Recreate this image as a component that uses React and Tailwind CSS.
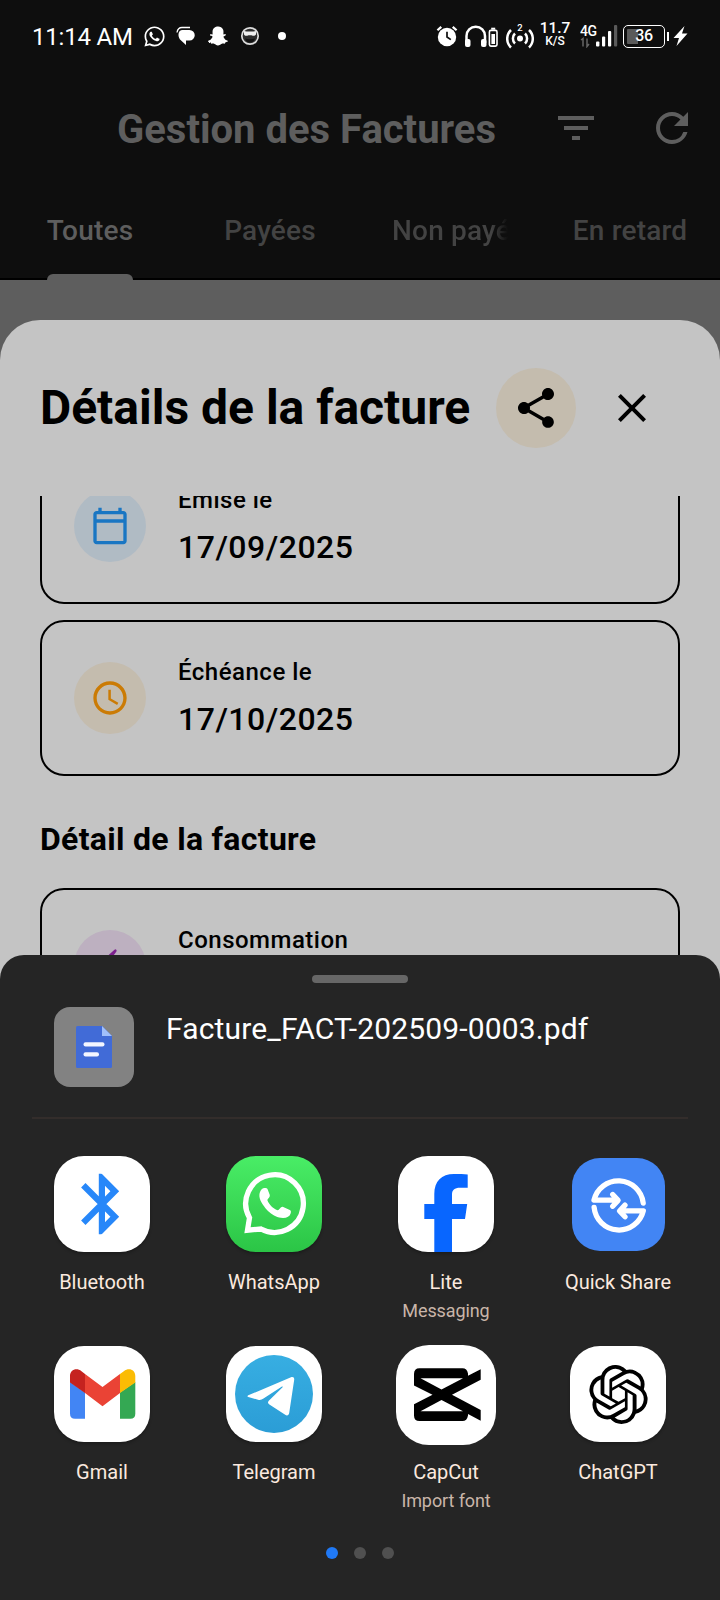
import React from "react";
import {
  MdFilterList,
  MdRefresh,
  MdShare,
  MdClose,
  MdOutlineCalendarToday,
  MdAccessTime,
  MdElectricBolt,
} from "react-icons/md";
import { FaWhatsapp, FaSnapchatGhost } from "react-icons/fa";
import { SiOpenai } from "react-icons/si";

function StatusBar() {
  return (
    <div className="flex h-[72px] items-center pl-[32px] text-white">
      <span className="mt-[1px] w-[99px] whitespace-nowrap text-[24px] leading-none tracking-[-0.200px]">11:14 AM</span>
      <FaWhatsapp className="ml-[12px] size-[23px]" />
      <svg className="ml-[10px] h-[20px] w-[20px]" viewBox="0 0 20 20">
        <path d="M6.500 4H13.500a5 5 0 0 1 0 10.500h-3.500v4.500L4 13.500C1.500 10 2 4 6.500 4Z" fill="white" />
        <path d="M1 6.500C1.500 3.500 3 1.500 6 1.500h8" stroke="white" strokeWidth="1.300" fill="none" />
      </svg>
      <FaSnapchatGhost className="ml-[12px] size-[20px]" />
      <svg className="ml-[12px] size-[20px]" viewBox="0 0 20 20">
        <circle cx="10" cy="10" r="8.200" fill="#2c2c2c" stroke="#ddd" strokeWidth="1.700" />
        <path d="M4 5l2.500.5h7L16 5v3.500c-1.500 2-3 1.200-4.500.7h-3C7 9.700 5 10.500 4 8.500Z" fill="#f0f0f0" />
        <path d="M5 12.500c3 1 7 1 10 0-1 3-3 4-5 4s-4-1-5-4Z" fill="#111" />
      </svg>
      <span className="ml-[18px] size-[8px] rounded-full bg-white" />

      <svg className="ml-[150px] h-[24px] w-[22px]" viewBox="0 0 23 24">
        <circle cx="11.500" cy="13" r="9.600" fill="white" />
        <path d="M1.500 6l4-3.500M21.500 6l-4-3.500" stroke="white" strokeWidth="2.400" />
        <path d="M11.500 7.500V13l4 2.800" stroke="#0e0e0e" strokeWidth="1.800" fill="none" />
      </svg>
      <svg className="ml-[6px] h-[24px] w-[35px] shrink-0" viewBox="0 0 35 24">
        <path d="M2.500 19v-7a9 9 0 0 1 18.500 0v7" stroke="white" strokeWidth="2.500" fill="none" />
        <rect x="1" y="15" width="5.500" height="8" rx="2" fill="white" />
        <rect x="17" y="15" width="5.500" height="8" rx="2" fill="white" />
        <rect x="25.400" y="6.400" width="7.600" height="15.700" rx="1.500" fill="none" stroke="white" strokeWidth="1.600" />
        <rect x="27.200" y="3.700" width="4" height="2" fill="white" />
        <rect x="27.400" y="10" width="3.600" height="10" fill="white" />
      </svg>
      <svg className="-mt-[1px] ml-[7px] h-[26px] w-[28px] shrink-0" viewBox="0 0 28 26">
        <circle cx="14" cy="15.500" r="3" fill="white" />
        <path d="M9 10.500a7 7 0 0 0 0 10M19 10.500a7 7 0 0 1 0 10M5 7a12 12 0 0 0 0 17.500M23 7a12 12 0 0 1 0 17.500" stroke="white" strokeWidth="2.500" fill="none" />
        <text x="14" y="8" fontSize="9.500" fontFamily="Roboto" fontWeight="500" fill="white" textAnchor="middle">2</text>
      </svg>
      <span className="-mt-[3px] ml-[6px] flex w-[30px] shrink-0 flex-col items-center font-medium">
        <span className="text-[15.500px] leading-[13px]">11.7</span>
        <span className="text-[12px] leading-[12px]">K/S</span>
      </span>
      <svg className="ml-[10px] h-[24px] w-[38px] shrink-0" viewBox="0 0 38 24">
        <text x="0" y="12" fontSize="14" fontFamily="Roboto" fontWeight="500" letterSpacing="-0.400" fill="white">4G</text>
        <path d="M1 16l2-1.500v8M7 14.500v8l2-2.500" stroke="#666" strokeWidth="1.500" fill="none" />
        <rect x="16" y="17.500" width="3.400" height="5" rx="1" fill="white" />
        <rect x="22" y="12.500" width="3.200" height="10" rx="1" fill="white" />
        <rect x="28" y="7" width="3.200" height="15.500" rx="1" fill="white" />
        <rect x="34" y="1" width="3.200" height="21.500" rx="1" fill="#5a5a5a" />
      </svg>
      <span className="ml-[5px] flex h-[23px] w-[42px] shrink-0 items-center justify-center rounded-[5px] border-[1.500px] border-white bg-[linear-gradient(90deg,#5a5a5a_36%,#0e0e0e_36%)] bg-clip-content p-[3px] text-[16px] font-medium leading-none tracking-[-0.300px]">
        36
      </span>
      <span className="ml-[2px] h-[9px] w-[2px] bg-white" />
      <svg className="ml-[4px] h-[22px] w-[15px]" viewBox="0 0 15 22">
        <path d="M11.500 1L0.500 13h5.500L3.500 21 14.500 8.500h-5.500Z" fill="white" />
      </svg>
    </div>
  );
}

function Tab({ label, active, clipped }) {
  return (
    <div className="relative flex w-[180px] items-center justify-center text-[28px] font-medium leading-none tracking-[0.200px]">
      {clipped ? (
        <span className="w-[116px] overflow-hidden whitespace-nowrap bg-[linear-gradient(90deg,#434343_86%,transparent)] bg-clip-text py-[4px] text-transparent">
          {label}
        </span>
      ) : (
        <span className={active ? "text-[#5e5e5e]" : "text-[#434343]"}>{label}</span>
      )}
      {active && <span className="absolute -bottom-[2px] h-[6px] w-[86px] rounded-t-[6px] bg-[#5e5e5e]" />}
    </div>
  );
}

function InfoCard({ icon, tint, label, value }) {
  return (
    <div className="flex h-[156px] shrink-0 items-center rounded-[24px] border-2 border-black pl-[32px]">
      <span className={"flex size-[72px] items-center justify-center rounded-full " + tint}>{icon}</span>
      <div className="mb-[2px] ml-[32px] flex flex-col gap-[19px] font-medium leading-none text-black">
        <span className="text-[24px] tracking-[0.500px]">{label}</span>
        <span className="h-[32px] text-[32px] tracking-[0.500px]">{value}</span>
      </div>
    </div>
  );
}

const tile = "size-[96px] rounded-[30px] shadow-[0_2px_3px_rgba(0,0,0,0.25)]";

function BluetoothIcon() {
  return (
    <svg className={tile + " bg-white"} viewBox="0 0 96 96">
      <clipPath id="bt"><rect x="20" y="17.700" width="60" height="60.500" /></clipPath>
      <path clipPath="url(#bt)" d="M29.300 66.800L60.800 35.200 47.900 22.300V73.700L60.800 60.800 29.300 29.200" fill="none" stroke="#2787f9" strokeWidth="6.200" strokeMiterlimit="4" />
    </svg>
  );
}

function WhatsAppIcon() {
  return (
    <svg className={tile + " bg-linear-to-b from-[#49ed66] to-[#2bc546]"} viewBox="0 0 96 96">
      <path d="M35 73A28.800 28.800 0 1 0 23.500 61.800L21.500 74.200Z" fill="none" stroke="white" strokeWidth="5.300" />
      <path d="M34 36C35 33.500 36.700 32 38.500 32C40.500 31.800 41.200 32.300 41.700 33.500L43.800 39C44.200 41 42 42.500 41.300 44C43 48.500 47 52.500 51.500 54.300C53.500 54 54.500 50.500 56.700 50.700L63.800 54C65 54.700 65.200 55.600 64.600 57.500C63.800 60.300 61 62 57 62C51.500 62 47.500 59.500 43.500 56.300C39.500 53 36 47.500 34.500 44.500C33.300 41.500 32.900 38.800 34 36Z" fill="white" />
    </svg>
  );
}

function FacebookLiteIcon() {
  return (
    <svg className={tile + " bg-white"} viewBox="0 0 96 96">
      <path d="M36.300 96V63H26.300V48H36.300V38C36.300 25 43.500 18 56 18C61 18 66 18 69.700 18.600V31.700H62C56.500 31.700 54 34 54 38.500V48H69.200L67 63H54V96Z" fill="#0866ff" />
    </svg>
  );
}

function QuickShareIcon() {
  return (
    <span className="flex size-[96px] items-center justify-center">
      <svg className="size-[93px] shrink-0 rounded-[28px] bg-[#4285f4]" viewBox="1.500 1.500 93 93">
        <g fill="none" stroke="white" strokeWidth="5.300" strokeLinecap="round" strokeLinejoin="round">
          <path d="M72.700 46.500A25 25 0 0 0 23.500 43.700H46M42.200 38L47.600 43.900L42.200 49.800" />
          <path d="M23.600 50.800A25 25 0 0 0 72.800 54.400H50M54.500 48.600L49 54.500L54.500 60.300" />
        </g>
      </svg>
    </span>
  );
}

function GmailIcon() {
  return (
    <svg className={tile + " bg-white"} viewBox="0 0 96 96">
      <path d="M16 36L31 46.500V72.700H21Q16 72.700 16 67.700Z" fill="#4285f4" />
      <path d="M66 46.500L81.300 36V67.700Q81.300 72.700 76.300 72.700H66Z" fill="#34a853" />
      <path d="M16 36.400V30C16 24 22.500 21 27.500 25.300L31 28V47Z" fill="#c5221f" />
      <path d="M66 28L69.800 25.300C75 21 81.300 24 81.300 30V36.400L66 47Z" fill="#fbbc04" />
      <path d="M31 28L48.500 41L66 28V47L48.500 60.300L31 47Z" fill="#ea4335" />
    </svg>
  );
}

function TelegramIcon() {
  return (
    <svg className={tile + " bg-white"} viewBox="0 0 96 96">
      <linearGradient id="tg" x1="0" y1="0" x2="0" y2="1">
        <stop offset="0" stopColor="#37aee2" />
        <stop offset="1" stopColor="#2b9dd6" />
      </linearGradient>
      <circle cx="48" cy="48" r="39" fill="url(#tg)" />
      <path d="M22.300 49.300L65 31.200C67 30.400 68.500 31.400 68.200 33.800L63.200 67C62.800 69.500 61 70 59.200 68.800L43 58.200C41.600 57.200 41.700 56 42.800 54.800L56.600 41.200C57 40.500 56.300 40.200 55.600 40.700L37.500 52.500C35.800 53.800 34 54.200 32 53.700L22.300 51C21.200 50.600 21.200 49.800 22.300 49.300Z" fill="white" />
    </svg>
  );
}

function CapCutIcon() {
  return (
    <span className="flex size-[96px] items-center justify-center pt-[2px]">
      <svg className="size-[100px] shrink-0 rounded-[33px] bg-white" viewBox="0 0 100 100">
        <path
          fillRule="evenodd"
          d="M18 29Q18 23.300 23.500 23.300H66.500Q71 23.300 72 28.500V30.700L84.700 24.300V34.700L56 49.700L84.700 65V75.700L72 69V70.500Q71 76 66.500 76H23.500Q18 76 18 70.500V59.300L36.500 49.700L18 40.500ZM24.500 33.300L45.500 44.500L67 33.300ZM24.500 66.200H67L45.500 55Z"
          fill="black"
        />
      </svg>
    </span>
  );
}

function ChatGPTIcon() {
  return (
    <span className={tile + " flex items-center justify-center bg-white"}>
      <SiOpenai className="size-[59px] text-black" />
    </span>
  );
}

const apps = [
  { name: "Bluetooth", Icon: BluetoothIcon },
  { name: "WhatsApp", Icon: WhatsAppIcon },
  { name: "Lite", sub: "Messaging", Icon: FacebookLiteIcon },
  { name: "Quick Share", Icon: QuickShareIcon },
  { name: "Gmail", Icon: GmailIcon },
  { name: "Telegram", Icon: TelegramIcon },
  { name: "CapCut", sub: "Import font", Icon: CapCutIcon },
  { name: "ChatGPT", Icon: ChatGPTIcon },
];

function ShareSheet() {
  return (
    <section className="absolute inset-x-0 bottom-0 flex h-[645px] flex-col rounded-t-[24px] bg-[#252525]">
      <div className="mx-auto mt-[20px] h-[8px] w-[96px] shrink-0 rounded-[4px] bg-[#676767]" />
      <div className="mt-[24px] flex h-[80px] shrink-0 pl-[54px]">
        <span className="flex size-[80px] items-center justify-center rounded-[16px] bg-[#828282]">
          <svg className="h-[42px] w-[36px]" viewBox="0 0 36 42">
            <path d="M1.500 0H26L36 10V40.500Q36 42 34.500 42H1.500Q0 42 0 40.500V1.500Q0 0 1.500 0Z" fill="#416bd7" />
            <path d="M26 0L36 10H26Z" fill="#a0bffb" />
            <rect x="7.500" y="16.200" width="21" height="4.200" rx="2" fill="#f3f6ff" />
            <rect x="7.500" y="26.200" width="15.500" height="4.200" rx="2" fill="#f3f6ff" />
          </svg>
        </span>
        <span className="ml-[32px] mt-[7px] whitespace-nowrap text-[30px] leading-none tracking-[0.150px] text-white">
          Facture_FACT-202509-0003.pdf
        </span>
      </div>
      <div className="mx-[32px] mt-[30px] h-[2px] shrink-0 bg-[#332d2b]" />
      <div className="mt-[37px] grid shrink-0 auto-rows-[190px] grid-cols-4 px-[16px]">
        {apps.map(({ name, sub, Icon }) => (
          <div key={name} className="flex flex-col items-center leading-none">
            <Icon />
            <span className="mt-[20px] text-[20px] text-[#fbe9df]">{name}</span>
            {sub && <span className="mt-[10px] text-[18px] tracking-[-0.100px] text-[#c9b5a9]">{sub}</span>}
          </div>
        ))}
      </div>
      <div className="mt-[11px] flex justify-center gap-[16px]">
        <span className="size-[12px] rounded-full bg-[#2079f5]" />
        <span className="size-[12px] rounded-full bg-[#505050]" />
        <span className="size-[12px] rounded-full bg-[#505050]" />
      </div>
    </section>
  );
}

export default function App() {
  return (
    <div className="relative flex h-[1600px] w-[720px] flex-col overflow-hidden bg-[#5e5e5e] font-['Roboto',sans-serif]">
      <header className="flex h-[280px] shrink-0 flex-col bg-[#0e0e0e]">
        <StatusBar />
        <div className="flex h-[112px] items-center pl-[117px] pr-[24px] text-[#5e5e5e]">
          <h1 className="mt-[3px] whitespace-nowrap text-[40px] font-bold leading-none">Gestion des Factures</h1>
          <MdFilterList className="ml-auto size-[48px]" />
          <MdRefresh className="ml-[48px] size-[48px]" />
        </div>
        <nav className="flex h-[96px] border-b-2 border-black">
          <Tab label="Toutes" active />
          <Tab label="Payées" />
          <Tab label="Non payées" clipped />
          <Tab label="En retard" />
        </nav>
      </header>

      <main className="mt-[40px] flex h-[700px] flex-col rounded-t-[40px] bg-[#c4c4c4] px-[40px] text-black">
        <div className="flex h-[176px] shrink-0 items-center">
          <h2 className="w-[456px] whitespace-nowrap text-[48px] font-bold leading-none">Détails de la facture</h2>
          <span className="flex size-[80px] items-center justify-center rounded-full bg-[#c4bcae]">
            <MdShare className="size-[48px]" />
          </span>
          <MdClose className="ml-[32px] size-[48px]" />
        </div>
        <div className="flex min-h-0 flex-1 flex-col overflow-hidden">
          <div className="-mt-[48px] flex flex-col gap-[16px]">
            <InfoCard label="Émise le" value="17/09/2025" tint="bg-[#b0bbc4]" icon={<MdOutlineCalendarToday className="size-[40px] text-[#1976c3]" />} />
            <InfoCard label="Échéance le" value="17/10/2025" tint="bg-[#c4bcae]" icon={<MdAccessTime className="size-[40px] text-[#cb7b04]" />} />
          </div>
          <h3 className="mb-[33px] mt-[47px] shrink-0 text-[32px] font-bold leading-none tracking-[0.300px]">Détail de la facture</h3>
          <InfoCard label="Consommation" value="" tint="bg-[#bdb0c0]" icon={<MdElectricBolt className="size-[40px] text-[#7d1f8e]" />} />
        </div>
      </main>

      <ShareSheet />
    </div>
  );
}
